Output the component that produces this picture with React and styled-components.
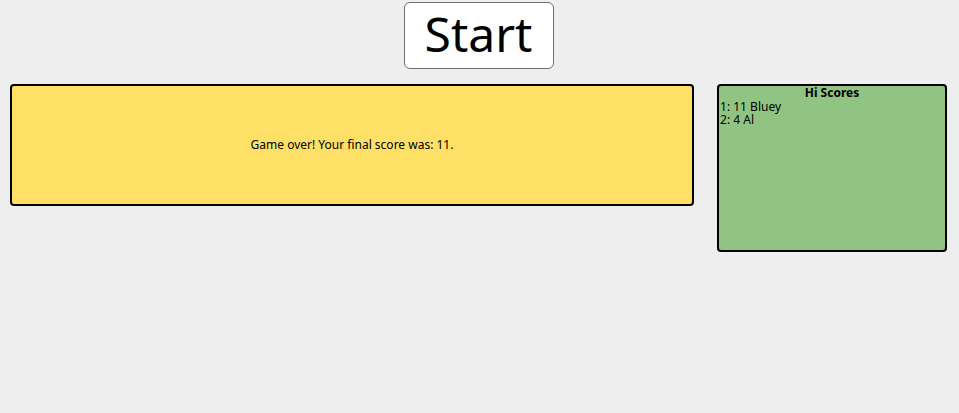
import React from 'react'
import styled, { createGlobalStyle } from 'styled-components'

const GlobalStyle = createGlobalStyle`
    html, body {
        margin: 0;
        padding: 0;
        background: #eeeeee;
        font-family: "Noto Sans", "Open Sans", sans-serif;
        color: #000;
    }
`

const Page = styled.div`
    display: flex;
    flex-direction: column;
    align-items: center;
    padding: 2px 12px 0 10px;
`

const StartBtn = styled.button`
    font-family: inherit;
    font-size: 48px;
    line-height: 1;
    width: 150px;
    height: 67px;
    padding: 0 0 4px 0;
    background: #fff;
    color: #000;
    border: 1px solid #6f6f6f;
    border-radius: 6px;
    cursor: pointer;
`

const Row = styled.div`
    align-self: stretch;
    display: flex;
    align-items: flex-start;
    gap: 23px;
    margin-top: 15px;
`

const Panel = styled.div`
    box-sizing: border-box;
    background: ${p => p.bg};
    border: 2px solid #000;
    border-radius: 4px;
`

const GameBox = styled(Panel)`
    flex: 1;
    height: 122px;
    display: flex;
    align-items: center;
    justify-content: center;
    font-size: 12px;
    padding-bottom: 2px;
`

const ScoreBox = styled(Panel)`
    width: 230px;
    height: 168px;
    font-size: 12px;
    line-height: 13.5px;
    padding: 0 1px;
`

const ScoreTitle = styled.div`
    font-weight: bold;
    text-align: center;
`

const ScoreLine = styled.div`
    white-space: nowrap;
`

const scores = [
    { score: 11, name: 'Bluey' },
    { score: 4, name: 'Al' },
]

export default function App() {
    return (
        <>
            <GlobalStyle />
            <Page>
                <StartBtn>Start</StartBtn>
                <Row>
                    <GameBox bg="#fee066">Game over! Your final score was: 11.</GameBox>
                    <ScoreBox bg="#91c483">
                        <ScoreTitle>Hi Scores</ScoreTitle>
                        {scores.map((s, i) => (
                            <ScoreLine key={i}>{i + 1}: {s.score} {s.name}</ScoreLine>
                        ))}
                    </ScoreBox>
                </Row>
            </Page>
        </>
    )
}
